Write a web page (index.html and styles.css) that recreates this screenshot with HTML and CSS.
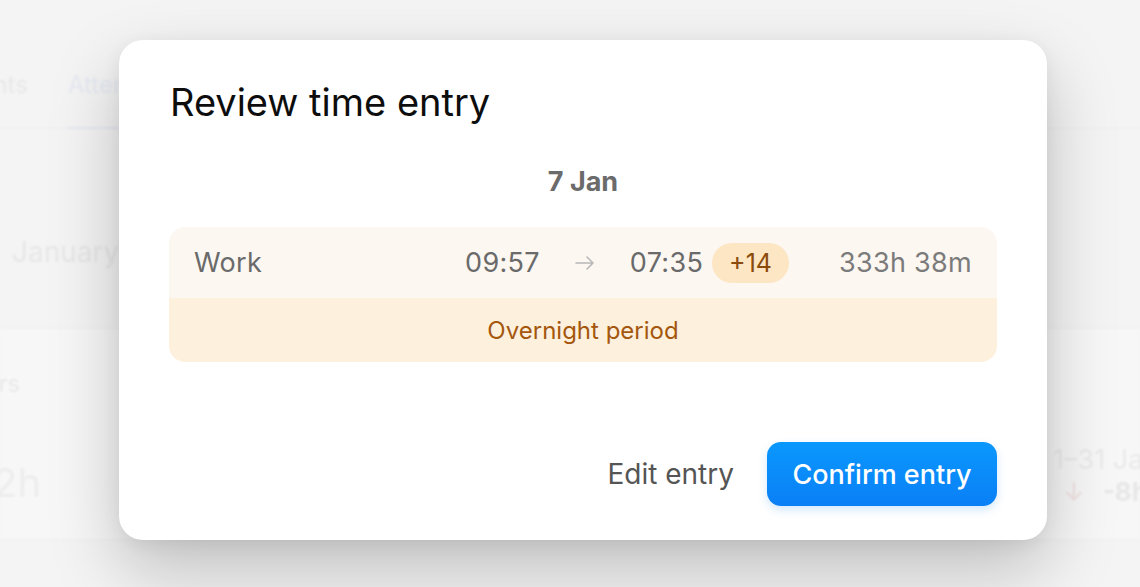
FILE: index.html
```html
<!DOCTYPE html>
<html lang="en">
<head>
<meta charset="utf-8">
<title>Review time entry</title>
<link rel="stylesheet" href="styles.css">
</head>
<body>
<div class="page">
  <nav class="tabs">
    <span class="tab">Events</span>
    <span class="tab tab-active">Attendance</span>
  </nav>
  <div class="month">January 2025</div>
  <section class="card">
    <div class="card-left">
      <div class="card-label">Hours</div>
      <div class="card-value">162h</div>
    </div>
    <div class="card-right">
      <div class="card-range">1–31 Jan</div>
      <div class="card-delta"><span class="delta-arrow">↓</span><span class="delta-value">-8h</span></div>
    </div>
  </section>
</div>

<div class="scrim"></div>

<div class="modal" role="dialog" aria-labelledby="modal-title">
  <h1 class="modal-title" id="modal-title">Review time entry</h1>
  <div class="modal-date">7 Jan</div>
  <div class="entry">
    <div class="entry-row">
      <span class="entry-type">Work</span>
      <span class="entry-time">09:57</span>
      <span class="entry-arrow">
        <svg width="22" height="16" viewBox="0 0 22 16" fill="none" stroke="currentColor" stroke-width="1.6" stroke-linecap="round" stroke-linejoin="round"><path d="M2 8h17M13 2l6 6-6 6"/></svg>
      </span>
      <span class="entry-time">07:35</span>
      <span class="entry-badge">+14</span>
      <span class="entry-duration">333h 38m</span>
    </div>
    <div class="entry-note">Overnight period</div>
  </div>
  <div class="modal-actions">
    <button class="btn-text" type="button">Edit entry</button>
    <button class="btn-primary" type="button">Confirm entry</button>
  </div>
</div>
</body>
</html>
```

FILE: styles.css
```css
* { box-sizing: border-box; }

html, body {
  margin: 0;
  height: 100%;
}

body {
  font-family: Inter, "Noto Sans", "Liberation Sans", sans-serif;
  background: #f6f6f6;
  overflow: hidden;
  position: relative;
}

/* ---------- blurred page behind ---------- */
.page {
  filter: blur(1.2px);
  color: #e3e3e3;
}

.tabs {
  display: flex;
  gap: 40px;
  height: 129px;
  padding-top: 70px;
  margin-left: -48px;
  border-bottom: 1px solid #ececec;
  font-size: 24px;
}

.tab { height: 59px; }

.tab-active {
  color: #dfe5f3;
  border-bottom: 2px solid #dfe5f3;
}

.month {
  padding: 106px 0 0 12px;
  font-size: 28px;
  color: #e2e2e2;
  height: 199px;
}

.card {
  display: flex;
  justify-content: space-between;
  height: 212px;
  background: #fbfbfb;
  border-top: 1px solid #eeeeee;
  border-bottom: 1px solid #eeeeee;
  padding: 40px 0 0;
}

.card-left { margin-left: -48px; }

.card-label {
  font-size: 24px;
  color: #e4e4e4;
}

.card-value {
  margin-top: 60px;
  font-size: 40px;
  color: #ebebeb;
}

.card-right {
  padding-top: 74px;
  width: 87px;
  white-space: nowrap;
}

.card-range {
  font-size: 27px;
  color: #e6e6e6;
}

.card-delta {
  margin-top: 0;
  display: flex;
  gap: 18px;
  font-size: 26px;
  padding-left: 10px;
}

.delta-arrow { color: #f1d9d9; }
.delta-value { font-weight: 700; color: #e2e2e2; }

/* ---------- scrim + modal ---------- */
.scrim {
  position: absolute;
  inset: 0;
  background: rgba(240, 240, 240, 0.35);
}

.modal {
  position: absolute;
  left: 119px;
  top: 40px;
  width: 928px;
  height: 500px;
  background: #ffffff;
  border-radius: 24px;
  box-shadow: 0 30px 70px rgba(0, 0, 0, 0.22), 0 4px 18px rgba(0, 0, 0, 0.06);
  padding: 40px 50px 34px;
  display: flex;
  flex-direction: column;
}

.modal-title {
  margin: 0;
  font-size: 38px;
  font-weight: 400;
  color: #0d0d0d;
  line-height: 44px;
  padding-left: 1px;
}

.modal-date {
  margin-top: 42px;
  text-align: center;
  font-size: 27px;
  font-weight: 700;
  color: #6b6b6b;
  line-height: 32px;
}

.entry {
  margin-top: 29px;
  border-radius: 16px;
  overflow: hidden;
}

.entry-row {
  display: flex;
  align-items: center;
  height: 71px;
  padding: 0 25px;
  background: #fcf7f1;
  font-size: 27px;
  letter-spacing: 0.3px;
  color: #6a6a6a;
}

.entry-type { flex: 1; }

.entry-time:first-of-type { margin-right: -3px; }

.entry-arrow {
  display: flex;
  color: #b8b8b8;
  margin: 0 34px;
}

.entry-badge {
  margin-left: 9px;
  height: 40px;
  padding: 0 17px;
  border-radius: 20px;
  background: #fde6c4;
  color: #8a4b0b;
  font-size: 25px;
  letter-spacing: 0;
  display: flex;
  align-items: center;
}

.entry-duration {
  margin-left: 50px;
  color: #7b7b7b;
}

.entry-note {
  height: 64px;
  display: flex;
  align-items: center;
  justify-content: center;
  background: #fdf1de;
  color: #a4570d;
  font-size: 24px;
}

.modal-actions {
  margin-top: auto;
  display: flex;
  justify-content: flex-end;
  align-items: center;
  gap: 33px;
}

.btn-text {
  border: 0;
  background: none;
  padding: 0;
  font: inherit;
  font-size: 28px;
  color: #555555;
}

.btn-primary {
  border: 0;
  font: inherit;
  font-size: 27px;
  font-weight: 500;
  color: #ffffff;
  width: 230px;
  height: 64px;
  border-radius: 14px;
  background: linear-gradient(#0a98fd, #0a7ff6);
  box-shadow: 0 4px 10px rgba(10, 128, 246, 0.18);
}
```
